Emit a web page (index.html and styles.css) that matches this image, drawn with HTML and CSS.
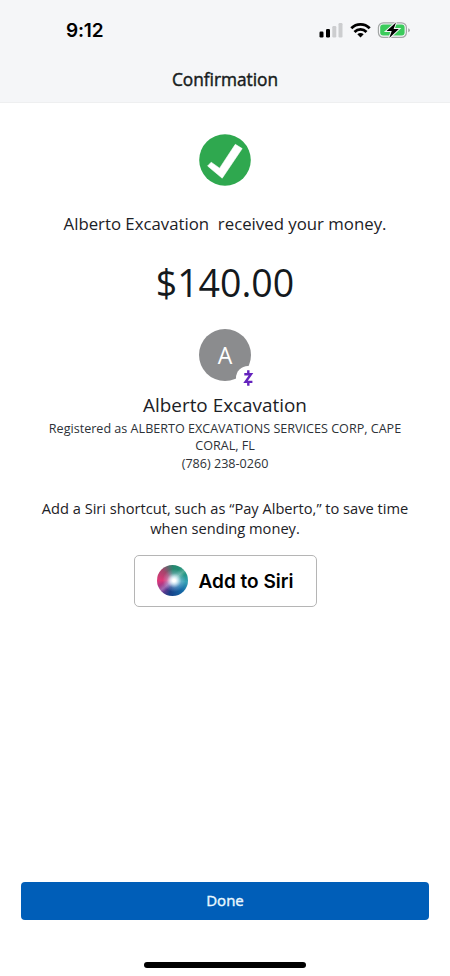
FILE: index.html
```html
<!DOCTYPE html>
<html lang="en">
<head>
<meta charset="utf-8">
<title>Confirmation</title>
<link rel="stylesheet" href="styles.css">
</head>
<body>
<div class="screen">
  <header class="header">
    <div class="status">
      <span class="time">9:12</span>
      <svg class="status-icons" width="94" height="20" viewBox="0 0 94 20">
        <rect x="0.5" y="11.5" width="4" height="6" rx="1.2"/>
        <rect x="7" y="9" width="4" height="8.500" rx="1.200"/>
        <rect x="13.300" y="6" width="4" height="11.500" rx="1.200" fill="#cccdcf"/>
        <rect x="19.500" y="3" width="4" height="14.500" rx="1.200" fill="#cccdcf"/>
        <g fill="none" stroke="#000" stroke-width="2.800">
          <path d="M32.300 8.300C37.500 3.100 45.500 3.100 50.700 8.300"/>
          <path d="M35.500 11.900C39 8.500 44 8.500 47.500 11.900"/>
        </g>
        <path d="M38.300 14.200Q41.500 11.700 44.700 14.200L41.500 17.400Z"/>
        <rect x="59.400" y="2.800" width="28" height="14.600" rx="4.800" fill="none" stroke="#a4a7a7" stroke-width="1.200"/>
        <rect x="61.200" y="4.600" width="24.400" height="11" rx="3" fill="#3bcb5c"/>
        <path d="M89.200 8.200q1.700.6 1.700 2t-1.700 2z" fill="#a4a7a7"/>
        <path d="M77 2.500L67.500 11.100H72.700L70.300 18L79.800 9.100H74.600Z" stroke="#f5f6f8" stroke-width="2" paint-order="stroke"/>
      </svg>
    </div>
    <h1 class="title">Confirmation</h1>
  </header>
  <main class="content">
    <svg class="check" width="52" height="52" viewBox="0 0 52 52">
      <circle cx="26" cy="26" r="25.800" fill="#2fa84f"/>
      <path d="M8.600 32L12.200 28.200L20.600 34.200L36.300 10.300L43.200 14.600L23.200 44.200Z" fill="#fff" stroke="#fff" stroke-width=".6" stroke-linejoin="round"/>
    </svg>
    <p class="received">Alberto Excavation&nbsp; received your money.</p>
    <p class="amount">$140.00</p>
    <div class="avatar">
      <span class="initial">A</span>
      <svg class="badge" width="24" height="24" viewBox="0 0 24 24">
        <circle cx="12" cy="12" r="12" fill="#fff"/>
        <path d="M8.300 8.200H15L9.600 15.900H16.400M12.300 4.300V8M12.300 16V19.800" fill="none" stroke="#6423bd" stroke-width="2.400"/>
      </svg>
    </div>
    <h2 class="name">Alberto Excavation</h2>
    <div class="details">
      <div class="registered">Registered as ALBERTO EXCAVATIONS SERVICES CORP, CAPE</div>
      <div class="city">CORAL, FL</div>
      <div class="phone">(786) 238-0260</div>
    </div>
    <p class="hint"><span class="hint-top">Add a Siri shortcut, such as “Pay Alberto,” to save time</span><br><span class="hint-end">when sending money.</span></p>
    <button class="siri">
      <span class="orb"></span>
      <span class="siri-label">Add to Siri</span>
    </button>
  </main>
  <footer class="footer">
    <button class="done">Done</button>
    <div class="home"></div>
  </footer>
</div>
</body>
</html>
```
FILE: styles.css
```css
* { box-sizing: border-box; margin: 0; }
body { background: #fff; font-family: "Open Sans", sans-serif; color: #1c2126; }
button { font: inherit; padding: 0; }
svg { display: block; }
span { white-space: nowrap; }
.screen { width: 450px; height: 976px; display: flex; flex-direction: column; overflow: hidden; }
.header { height: 103px; flex: none; background: #f5f6f8; border-bottom: 1px solid #eeeff0; }
.status { height: 60px; padding: 0 37px 0 66px; display: flex; justify-content: space-between; align-items: center; }
.time { font: 600 19px/24px Inter, sans-serif; letter-spacing: -.2px; color: #000; padding-top: 2px; }
.title { font-size: 17.300px; line-height: 24px; font-weight: 400; -webkit-text-stroke: .45px; text-align: center; margin-top: 8px; color: #171c20; }
.content { flex: 1; display: flex; flex-direction: column; align-items: center; text-align: center; }
.check { margin-top: 31px; flex: none; }
.received { font-size: 16.800px; line-height: 24px; margin-top: 26px; }
.amount { font-size: 37.500px; line-height: 50px; margin-top: 22px; color: #14191d; }
.avatar { width: 52px; height: 52px; margin-top: 21px; border-radius: 50%; background: #8b8c8e; position: relative; color: #fff; font-size: 23px; line-height: 53px; }
.badge { position: absolute; left: 37px; top: 37px; }
.name { font-size: 18.900px; line-height: 26px; font-weight: 400; margin-top: 11px; }
.details { font-size: 12.580px; line-height: 17.600px; margin-top: 1.500px; color: #2d3237; white-space: nowrap; }
.hint { font-size: 14.650px; line-height: 20px; margin-top: 25.500px; }
.siri { width: 183px; height: 52px; margin-top: 17px; background: #fff; border: 1px solid #b5b5b5; border-radius: 5px; display: flex; align-items: center; padding-left: 22px; gap: 11px; }
.orb { width: 31px; height: 31px; border-radius: 50%; background: radial-gradient(circle at 55% 50%, #fff 0 6%, rgba(225,242,252,.85) 16%, rgba(190,215,245,.3) 32%, transparent 50%), linear-gradient(140deg, transparent 40%, rgba(255,255,255,.25) 50%, transparent 58%), conic-gradient(from 0deg at 52% 50%, #26876f, #1f947c 55deg, #35a2b4 95deg, #1468a6 140deg, #183f87 195deg, #7c3693 230deg, #df3878 270deg, #a5446c 315deg, #26876f); }
.siri-label { font: 600 19px/24px Inter, sans-serif; color: #000; padding-top: 2px; }
.footer { height: 94px; flex: none; display: flex; flex-direction: column; align-items: center; }
.done { width: 408px; height: 38px; border: 0; border-radius: 4px; background: #005eb8; color: #e9f8ff; font-size: 15px; font-weight: 400; -webkit-text-stroke: .4px; padding-bottom: 2px; }
.home { width: 162px; height: 6px; border-radius: 3px; background: #000; margin-top: 42px; }
```
